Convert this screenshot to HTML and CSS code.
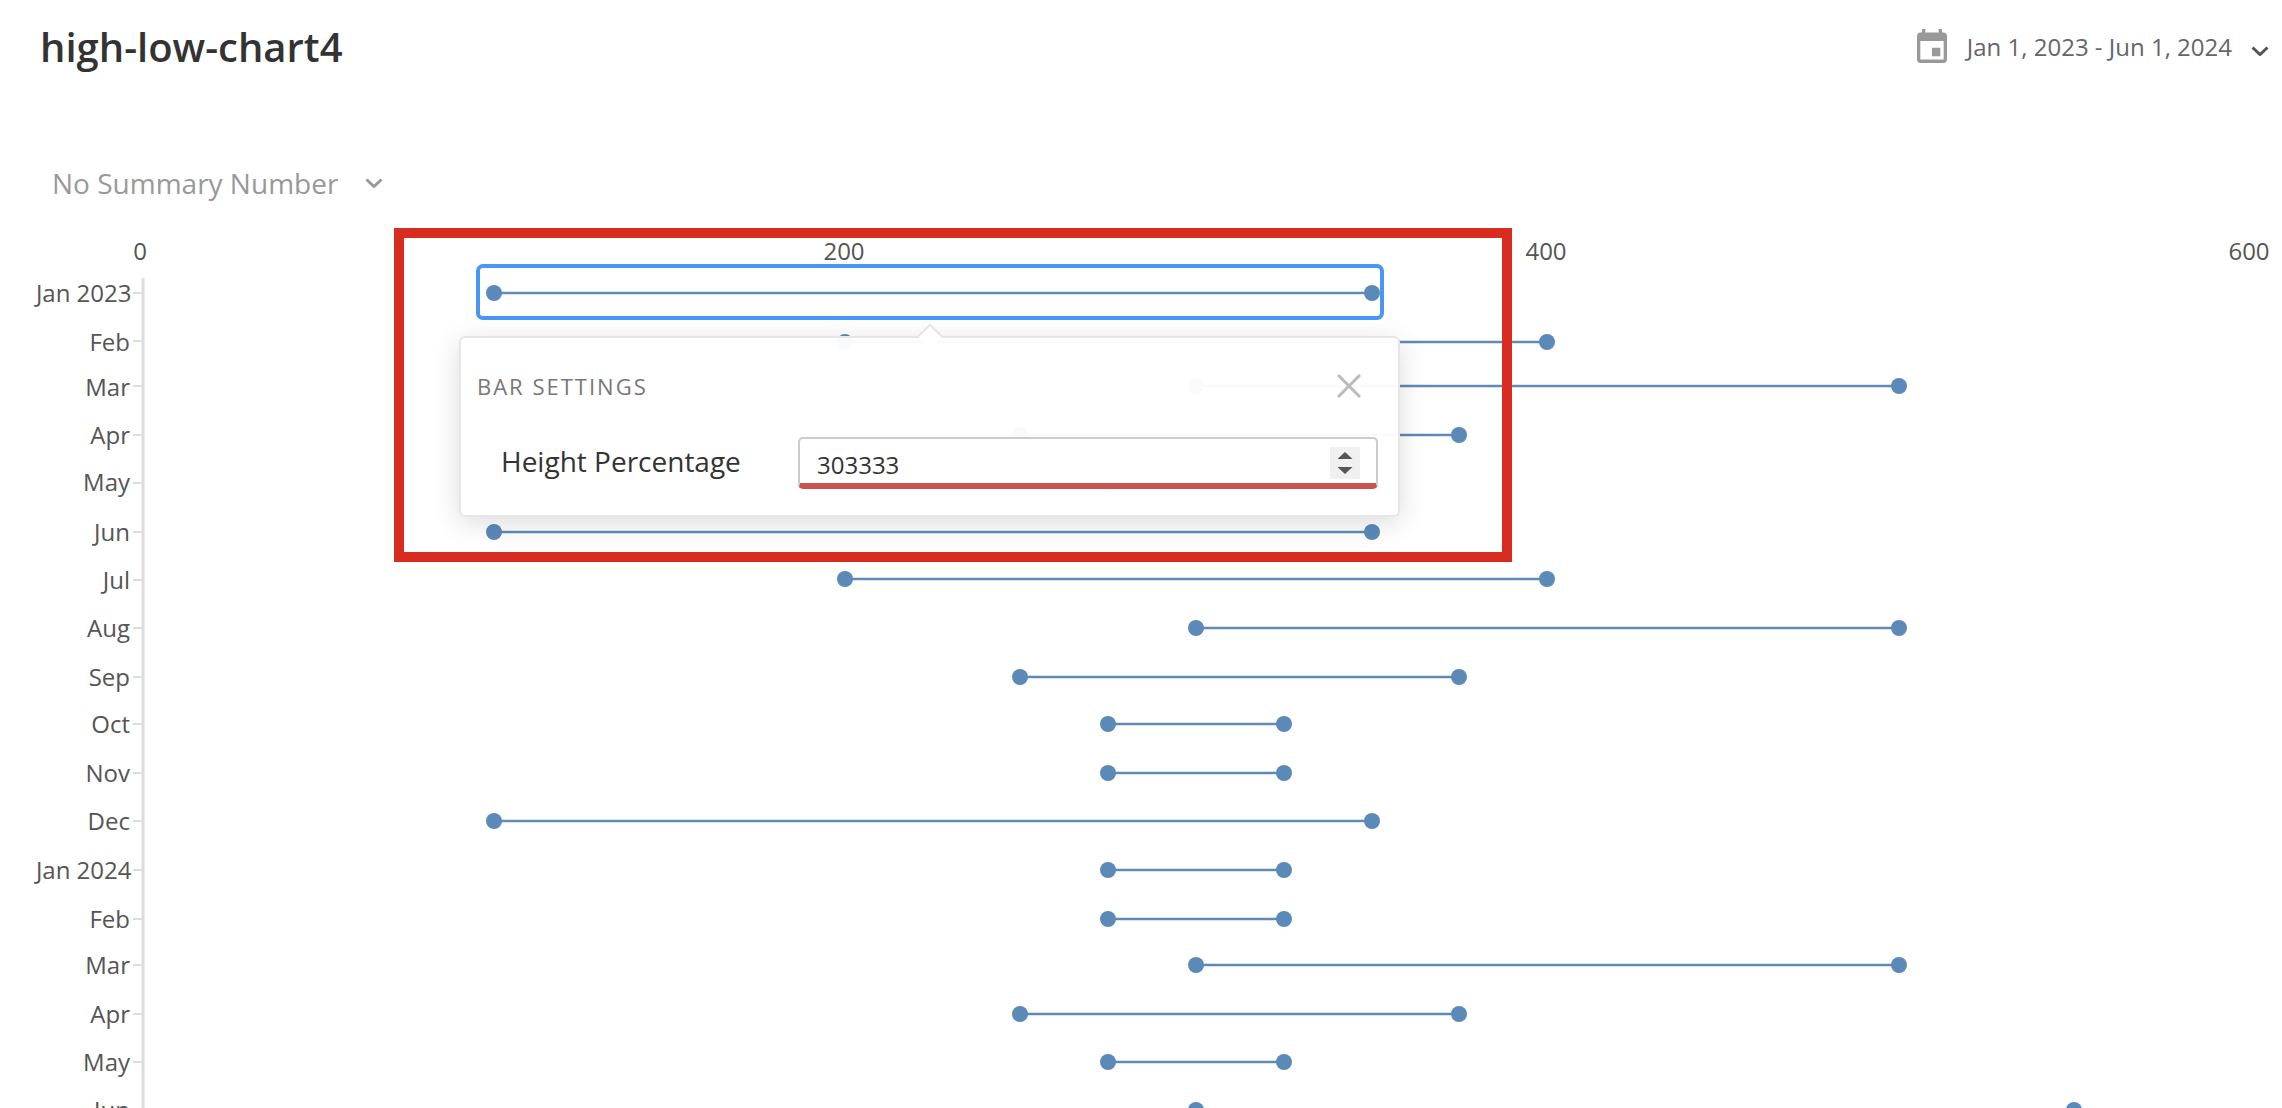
FILE: index.html
```html
<!DOCTYPE html>
<html lang="en">
<head>
  <meta charset="UTF-8" />
  <meta name="viewport" content="width=device-width, initial-scale=1.0" />
  <title>high-low-chart4</title>
  <link rel="stylesheet" href="styles.css">
</head>
<body>
  <header class="page-header">
    <h1>high-low-chart4</h1>
    <div class="date-range">
      <svg class="calendar-icon" viewBox="3 1 18 20" preserveAspectRatio="none" aria-hidden="true">
        <path d="M19 3h-1V1h-2v2H8V1H6v2H5c-1.11 0-1.99.9-1.99 2L3 19c0 1.1.89 2 2 2h14c1.1 0 2-.9 2-2V5c0-1.1-.9-2-2-2zm0 16H5V8h14v11zM17 12h-5v5h5z"/>
      </svg>
      <span class="date-text">Jan 1, 2023 - Jun 1, 2024</span>
      <svg class="chevron chevron-dark" viewBox="0 0 18 10" aria-hidden="true"><path d="M1.5 1.5 9 8.5l7.5-7"/></svg>
    </div>
  </header>

  <div class="summary">
    <span>No Summary Number</span>
    <svg class="chevron chevron-light" viewBox="0 0 18 10" aria-hidden="true"><path d="M1.5 1.5 9 8.5l7.5-7"/></svg>
  </div>

  <div class="chart">
    <svg class="plot" viewBox="0 230 2282 878" width="2282" height="878">
      <g class="x-labels">
        <text x="140" y="260">0</text>
        <text x="844" y="260">200</text>
        <text x="1546" y="260">400</text>
        <text x="2249" y="260">600</text>
      </g>
      <line class="axis" x1="143" y1="278" x2="143" y2="1108"/>
      <g class="y-labels">
        <text x="131.5" y="302">Jan 2023</text>
        <text x="130" y="351">Feb</text>
        <text x="130" y="396">Mar</text>
        <text x="130" y="444">Apr</text>
        <text x="130" y="491">May</text>
        <text x="130" y="541">Jun</text>
        <text x="130" y="589">Jul</text>
        <text x="130" y="637">Aug</text>
        <text x="130" y="686">Sep</text>
        <text x="130" y="733">Oct</text>
        <text x="130" y="782">Nov</text>
        <text x="130" y="830">Dec</text>
        <text x="131.5" y="879">Jan 2024</text>
        <text x="130" y="928">Feb</text>
        <text x="130" y="974">Mar</text>
        <text x="130" y="1023">Apr</text>
        <text x="130" y="1071">May</text>
        <text x="130" y="1119">Jun</text>
      </g>
      <path class="ticks" d="M133 293h10M133 341h10M133 386h10M133 435h10M133 483h10M133 532h10M133 580h10M133 628h10M133 677h10M133 724h10M133 773h10M133 821h10M133 870h10M133 919h10M133 965h10M133 1014h10M133 1062h10M133 1110h10"/>
      <g class="bars">
        <line x1="494" y1="293" x2="1372" y2="293"/><circle cx="494" cy="293" r="8"/><circle cx="1372" cy="293" r="8"/>
        <line x1="845" y1="342" x2="1547" y2="342"/><circle cx="845" cy="342" r="8"/><circle cx="1547" cy="342" r="8"/>
        <line x1="1196" y1="386" x2="1899" y2="386"/><circle cx="1196" cy="386" r="8"/><circle cx="1899" cy="386" r="8"/>
        <line x1="1020" y1="435" x2="1459" y2="435"/><circle cx="1020" cy="435" r="8"/><circle cx="1459" cy="435" r="8"/>
        <line x1="1108" y1="483" x2="1284" y2="483"/><circle cx="1108" cy="483" r="8"/><circle cx="1284" cy="483" r="8"/>
        <line x1="494" y1="532" x2="1372" y2="532"/><circle cx="494" cy="532" r="8"/><circle cx="1372" cy="532" r="8"/>
        <line x1="845" y1="579" x2="1547" y2="579"/><circle cx="845" cy="579" r="8"/><circle cx="1547" cy="579" r="8"/>
        <line x1="1196" y1="628" x2="1899" y2="628"/><circle cx="1196" cy="628" r="8"/><circle cx="1899" cy="628" r="8"/>
        <line x1="1020" y1="677" x2="1459" y2="677"/><circle cx="1020" cy="677" r="8"/><circle cx="1459" cy="677" r="8"/>
        <line x1="1108" y1="724" x2="1284" y2="724"/><circle cx="1108" cy="724" r="8"/><circle cx="1284" cy="724" r="8"/>
        <line x1="1108" y1="773" x2="1284" y2="773"/><circle cx="1108" cy="773" r="8"/><circle cx="1284" cy="773" r="8"/>
        <line x1="494" y1="821" x2="1372" y2="821"/><circle cx="494" cy="821" r="8"/><circle cx="1372" cy="821" r="8"/>
        <line x1="1108" y1="870" x2="1284" y2="870"/><circle cx="1108" cy="870" r="8"/><circle cx="1284" cy="870" r="8"/>
        <line x1="1108" y1="919" x2="1284" y2="919"/><circle cx="1108" cy="919" r="8"/><circle cx="1284" cy="919" r="8"/>
        <line x1="1196" y1="965" x2="1899" y2="965"/><circle cx="1196" cy="965" r="8"/><circle cx="1899" cy="965" r="8"/>
        <line x1="1020" y1="1014" x2="1459" y2="1014"/><circle cx="1020" cy="1014" r="8"/><circle cx="1459" cy="1014" r="8"/>
        <line x1="1108" y1="1062" x2="1284" y2="1062"/><circle cx="1108" cy="1062" r="8"/><circle cx="1284" cy="1062" r="8"/>
        <line x1="1196" y1="1110" x2="2074" y2="1110"/><circle cx="1196" cy="1110" r="8"/><circle cx="2074" cy="1110" r="8"/>
      </g>
    </svg>

    <div class="bar-selection"></div>

    <div class="popover">
      <div class="popover-head">
        <span class="popover-title">BAR SETTINGS</span>
        <svg class="close-icon" viewBox="0 0 24 24" aria-hidden="true"><path d="M1 1l22 22M23 1 1 23"/></svg>
      </div>
      <div class="popover-row">
        <label for="heightPercentage">Height Percentage</label>
        <div class="number-field">
          <input type="text" id="heightPercentage" value="303333" autocomplete="off" />
          <svg class="spinner" viewBox="0 0 30 32" aria-hidden="true"><path d="M15 5l7.5 7h-15zM15 27l7.5-7h-15z"/></svg>
        </div>
      </div>
    </div>

    <div class="highlight-frame"></div>
  </div>
</body>
</html>
```

FILE: styles.css
```css
/* Basic Reset */
*, *:before, *:after {
  box-sizing: border-box;
  margin: 0;
  padding: 0;
  font-family: "Open Sans", Arial, sans-serif;
}

body {
  height: 100vh;
  overflow: hidden;
  background: #ffffff;
}

.page-header {
  display: flex;
  justify-content: space-between;
  align-items: flex-start;
  padding: 20px 13px 0 40px;
}

h1 {
  font-size: 40px;
  line-height: 54px;
  font-weight: 600;
  color: #333;
}

.date-range {
  display: flex;
  align-items: center;
  margin-top: 7px;
  color: #666;
  font-size: 24px;
}

.calendar-icon {
  width: 30px;
  height: 34px;
  fill: #999;
}

.date-text {
  margin: 3px 19px 0 20px;
  line-height: 34px;
  white-space: nowrap;
}

.chevron {
  width: 18px;
  height: 10px;
  fill: none;
  stroke-width: 3;
}

.chevron-dark {
  margin-top: 10px;
  stroke: #555;
}

.chevron-light {
  margin-left: 27px;
  stroke: #999;
}

.summary {
  display: flex;
  align-items: center;
  margin-top: 90px;
  padding-left: 52px;
  font-size: 28px;
  line-height: 38px;
  color: #999;
}

.chart {
  position: relative;
  height: 878px;
  margin-top: 28px;
}

.plot {
  display: block;
}

.plot text {
  font-size: 24px;
  fill: #555;
}

.x-labels text {
  text-anchor: middle;
}

.y-labels text {
  text-anchor: end;
}

.axis {
  stroke: #ddd;
  stroke-width: 3;
}

.ticks {
  stroke: #ddd;
  stroke-width: 2;
  fill: none;
}

.bars line {
  stroke: #5f8ab5;
  stroke-width: 2.5;
}

.bars circle {
  fill: #5b8ab8;
}

.bar-selection {
  position: absolute;
  left: 476px;
  top: 34px;
  width: 908px;
  height: 56px;
  border: 4px solid #4a96f5;
  border-radius: 7px;
}

.popover {
  position: absolute;
  left: 459px;
  top: 106px;
  width: 941px;
  height: 181px;
  background: rgba(255, 255, 255, 0.96);
  border: 2px solid #e6e6e6;
  border-radius: 6px;
  box-shadow: 0 6px 28px rgba(0, 0, 0, 0.14);
}

.popover:before {
  content: "";
  position: absolute;
  left: 460px;
  top: -11px;
  width: 18px;
  height: 18px;
  background: #ffffff;
  border-top: 2px solid #e6e6e6;
  border-left: 2px solid #e6e6e6;
  transform: rotate(45deg);
}

.popover-head {
  display: flex;
  justify-content: space-between;
  align-items: center;
  padding: 33px 37px 0 16px;
}

.popover-title {
  font-size: 22px;
  line-height: 30px;
  letter-spacing: 2px;
  color: #777;
}

.close-icon {
  width: 24px;
  height: 24px;
  fill: none;
  stroke: #bbb;
  stroke-width: 3;
}

.popover-row {
  display: flex;
  align-items: center;
  margin-top: 36px;
  padding-left: 40px;
}

.popover-row label {
  width: 297px;
  margin-bottom: 4px;
  font-size: 28px;
  line-height: 37px;
  color: #333;
}

.number-field {
  display: flex;
  align-items: center;
  width: 580px;
  height: 52px;
  padding: 0 16px 0 17px;
  background: #ffffff;
  border: 2px solid #ccc;
  border-bottom: 6px solid #c9534c;
  border-radius: 5px;
}

.number-field input {
  flex: 1;
  min-width: 0;
  padding-top: 6px;
  border: none;
  outline: none;
  background: transparent;
  font-size: 24px;
  color: #333;
}

.spinner {
  width: 30px;
  height: 32px;
  margin-top: 4px;
  background: #f0f0f0;
  fill: #555;
}

/* Annotation drawn over the screenshot */
.highlight-frame {
  position: absolute;
  left: 394px;
  top: -2px;
  width: 1118px;
  height: 334px;
  border: 10px solid #d92c20;
}
```
